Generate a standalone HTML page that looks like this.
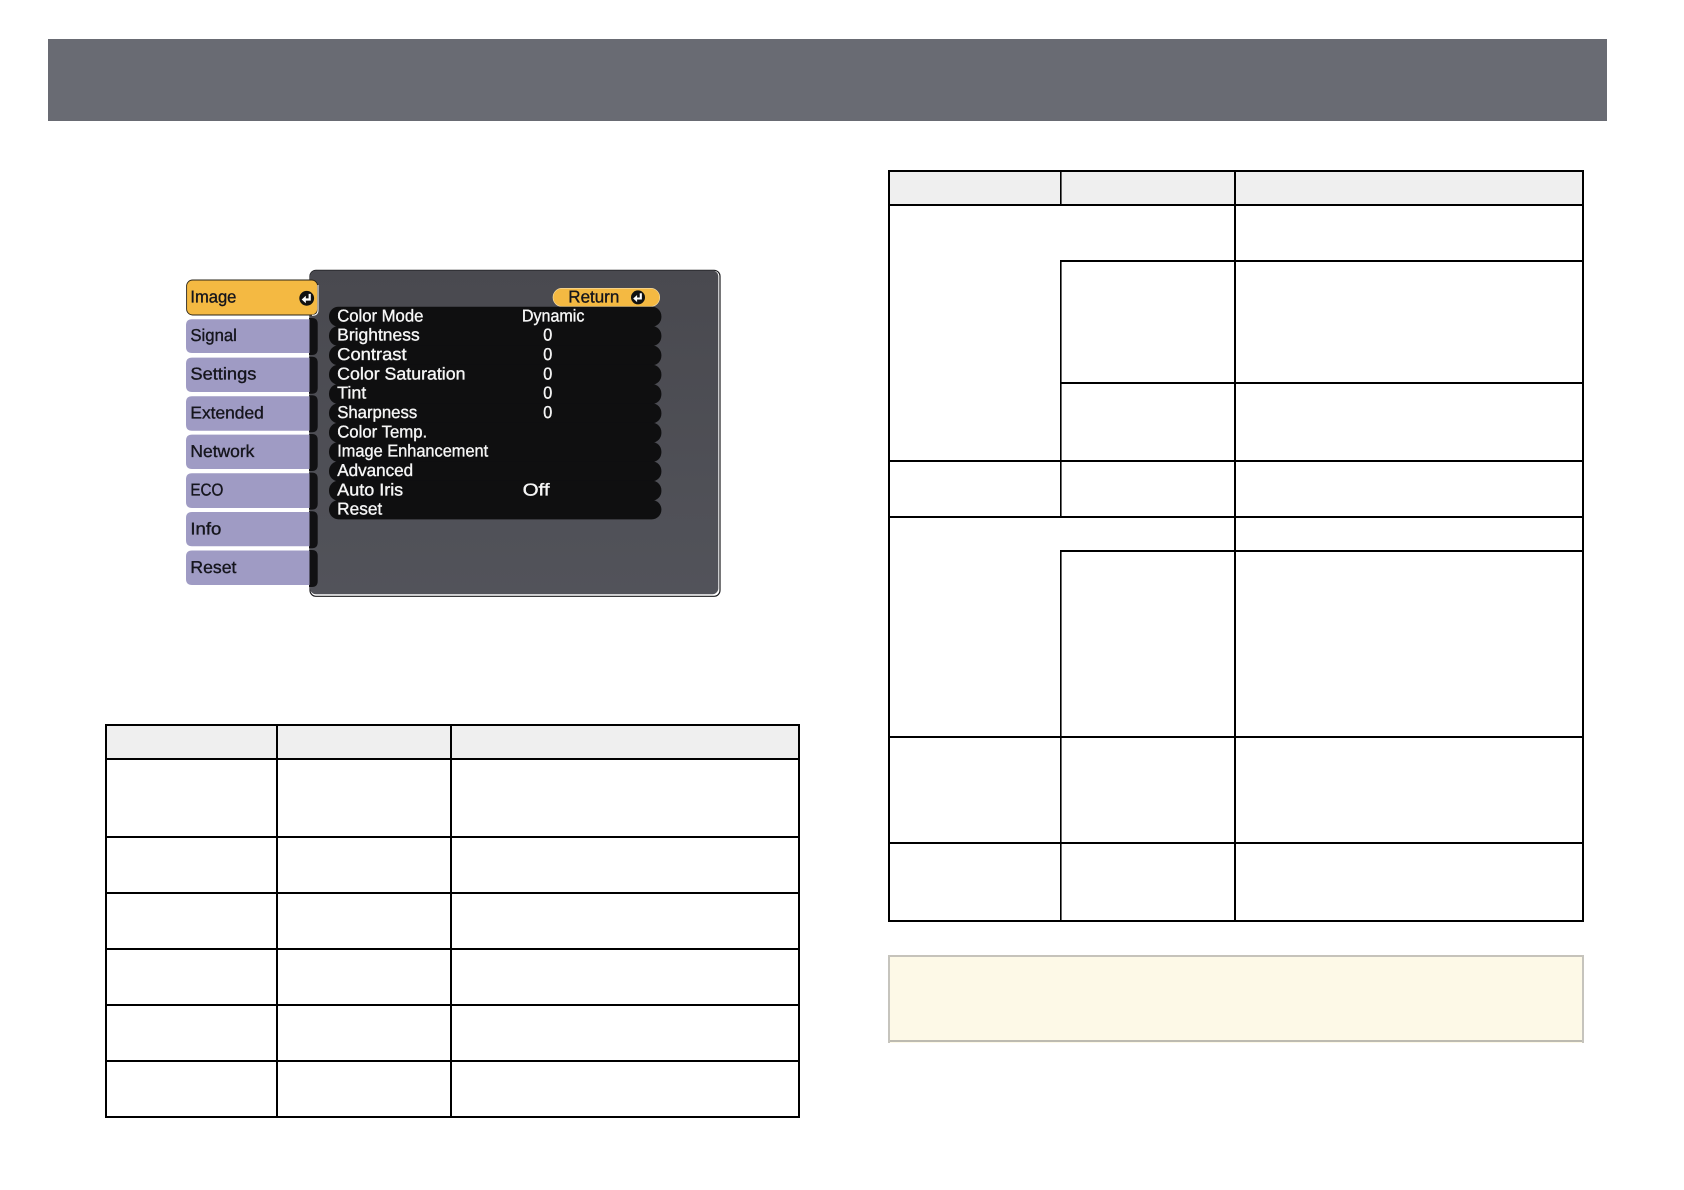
<!DOCTYPE html>
<html lang="en">
<head>
<meta charset="utf-8">
<title>Image menu</title>
<style>
html,body{margin:0;padding:0;background:#fff;width:1684px;height:1190px;overflow:hidden}
svg{position:absolute;left:0;top:0;display:block}
text{font-family:"Liberation Sans",Arial,sans-serif;font-size:17.2px;text-rendering:geometricPrecision}
.w{fill:#f6f6f6;stroke:#f6f6f6;stroke-width:.35}
.d{fill:#15151c;stroke:#15151c;stroke-width:.35}
</style>
</head>
<body>
<svg width="1684" height="1190" viewBox="0 0 1684 1190" xmlns="http://www.w3.org/2000/svg">
<defs>
<linearGradient id="pg" x1="0" y1="0" x2="0" y2="1">
<stop offset="0" stop-color="#49494f"/>
<stop offset="1" stop-color="#52535a"/>
</linearGradient>
</defs>

<!-- header band -->
<rect x="48" y="39" width="1559" height="82" fill="#696b73"/>

<!-- menu panel -->
<rect x="310" y="270.3" width="410" height="326" rx="6" fill="#fff" stroke="#1c1c1f" stroke-width="1.2"/>
<rect x="310" y="270.5" width="408.3" height="323.8" rx="6" fill="url(#pg)"/>

<!-- dark notches beside the tabs -->
<g fill="#111113">
<path d="M309 318H312Q317.7 318 317.7 324V349Q317.7 355 312 355H309Z"/>
<path d="M309 356.7H312Q317.7 356.7 317.7 362.7V387.7Q317.7 393.7 312 393.7H309Z"/>
<path d="M309 395.3H312Q317.7 395.3 317.7 401.3V426.3Q317.7 432.3 312 432.3H309Z"/>
<path d="M309 434H312Q317.7 434 317.7 440V465Q317.7 471 312 471H309Z"/>
<path d="M309 472.6H312Q317.7 472.6 317.7 478.6V503.6Q317.7 509.6 312 509.6H309Z"/>
<path d="M309 511.3H312Q317.7 511.3 317.7 517.3V542.3Q317.7 548.3 312 548.3H309Z"/>
<path d="M309 550H312Q317.7 550 317.7 556V581Q317.7 587 312 587H309Z"/>
</g>

<!-- purple tabs -->
<g fill="#9f9bc4">
<path d="M309.5 319.3V353H192Q186 353 186 347V325.3Q186 319.3 192 319.3Z"/>
<path d="M309.5 357.6V392H192Q186 392 186 386V363.6Q186 357.6 192 357.6Z"/>
<path d="M309.5 396.3V430.7H192Q186 430.7 186 424.7V402.3Q186 396.3 192 396.3Z"/>
<path d="M309.5 434.6V469H192Q186 469 186 463V440.6Q186 434.6 192 434.6Z"/>
<path d="M309.5 473.3V508H192Q186 508 186 502V479.3Q186 473.3 192 473.3Z"/>
<path d="M309.5 512V546.3H192Q186 546.3 186 540.3V518Q186 512 192 512Z"/>
<path d="M309.5 550.5V585H192Q186 585 186 579V556.5Q186 550.5 192 550.5Z"/>
</g>

<!-- selected tab -->
<rect x="186.6" y="280" width="131" height="35" rx="6" fill="#f4b942" stroke="#2a2418" stroke-width=".9"/>
<path d="M312 315.3H313Q318 315 318 310V285" fill="none" stroke="#fff" stroke-width="1"/>

<!-- tab labels -->
<text class="d" x="190.4" y="302.3" textLength="46" lengthAdjust="spacingAndGlyphs">Image</text>
<text class="d" x="190.4" y="341" textLength="46.5" lengthAdjust="spacingAndGlyphs">Signal</text>
<text class="d" x="190.4" y="379.6" textLength="66" lengthAdjust="spacingAndGlyphs">Settings</text>
<text class="d" x="190.4" y="418.3" textLength="73.4" lengthAdjust="spacingAndGlyphs">Extended</text>
<text class="d" x="190.4" y="457" textLength="64" lengthAdjust="spacingAndGlyphs">Network</text>
<text class="d" x="190.4" y="495.6" textLength="33" lengthAdjust="spacingAndGlyphs">ECO</text>
<text class="d" x="190.4" y="534.3" textLength="31" lengthAdjust="spacingAndGlyphs">Info</text>
<text class="d" x="190.4" y="573" textLength="46" lengthAdjust="spacingAndGlyphs">Reset</text>

<!-- enter icon on the selected tab -->
<g transform="translate(306.7 298.3)">
<circle r="7.4" fill="#111"/>
<path d="M3 -4.4V1.2H-1.5" fill="none" stroke="#fff" stroke-width="2.2"/>
<path d="M-5 1.2L-.9 -2.6V5Z" fill="#fff"/>
</g>

<!-- return pill -->
<rect x="553" y="288.3" width="106.7" height="18.2" rx="9" fill="#f4b942" stroke="#f8e2ae" stroke-width=".6"/>
<text class="d" x="568.3" y="302.3" textLength="51" lengthAdjust="spacingAndGlyphs">Return</text>
<g transform="translate(638 297.4)">
<circle r="7" fill="#111"/>
<path d="M2.8 -4.2V1.1H-1.4" fill="none" stroke="#fff" stroke-width="2.1"/>
<path d="M-4.8 1.1L-.9 -2.4V4.7Z" fill="#fff"/>
</g>

<!-- list rows -->
<g fill="#0f0f10">
<rect x="329" y="306.7" width="332.4" height="20" rx="9.6"/>
<rect x="329" y="326" width="332.4" height="20" rx="9.6"/>
<rect x="329" y="345.4" width="332.4" height="20" rx="9.6"/>
<rect x="329" y="364.7" width="332.4" height="20" rx="9.6"/>
<rect x="329" y="384" width="332.4" height="20" rx="9.6"/>
<rect x="329" y="403.3" width="332.4" height="20" rx="9.6"/>
<rect x="329" y="422.7" width="332.4" height="20" rx="9.6"/>
<rect x="329" y="442" width="332.4" height="20" rx="9.6"/>
<rect x="329" y="461.3" width="332.4" height="20" rx="9.6"/>
<rect x="329" y="480.7" width="332.4" height="20" rx="9.6"/>
<rect x="329" y="500" width="332.4" height="19.33" rx="9.6"/>
</g>

<text class="w" x="337.2" y="321.3" textLength="86.2" lengthAdjust="spacingAndGlyphs">Color Mode</text>
<text class="w" x="337.2" y="340.6" textLength="82.5" lengthAdjust="spacingAndGlyphs">Brightness</text>
<text class="w" x="337.2" y="360" textLength="69.4" lengthAdjust="spacingAndGlyphs">Contrast</text>
<text class="w" x="337.2" y="379.3" textLength="128.3" lengthAdjust="spacingAndGlyphs">Color Saturation</text>
<text class="w" x="337.2" y="398.6" textLength="29" lengthAdjust="spacingAndGlyphs">Tint</text>
<text class="w" x="337.2" y="418" textLength="80" lengthAdjust="spacingAndGlyphs">Sharpness</text>
<text class="w" x="337.2" y="437.3" textLength="90" lengthAdjust="spacingAndGlyphs">Color Temp.</text>
<text class="w" x="337.2" y="456.6" textLength="151" lengthAdjust="spacingAndGlyphs">Image Enhancement</text>
<text class="w" x="337.2" y="476" textLength="76" lengthAdjust="spacingAndGlyphs">Advanced</text>
<text class="w" x="337.2" y="495.3" textLength="66" lengthAdjust="spacingAndGlyphs">Auto Iris</text>
<text class="w" x="337.2" y="514.6" textLength="45" lengthAdjust="spacingAndGlyphs">Reset</text>

<text class="w" x="521.9" y="321.3" textLength="62.5" lengthAdjust="spacingAndGlyphs">Dynamic</text>
<text class="w" x="543.3" y="340.6" textLength="9" lengthAdjust="spacingAndGlyphs">0</text>
<text class="w" x="543.3" y="360" textLength="9" lengthAdjust="spacingAndGlyphs">0</text>
<text class="w" x="543.3" y="379.3" textLength="9" lengthAdjust="spacingAndGlyphs">0</text>
<text class="w" x="543.3" y="398.6" textLength="9" lengthAdjust="spacingAndGlyphs">0</text>
<text class="w" x="543.3" y="418" textLength="9" lengthAdjust="spacingAndGlyphs">0</text>
<text class="w" x="522.6" y="495.3" textLength="27" lengthAdjust="spacingAndGlyphs">Off</text>

<!-- left table -->
<rect x="106" y="725" width="693" height="34" fill="#efefef"/>
<g fill="#000">
<rect x="105" y="724" width="695" height="2"/>
<rect x="105" y="758" width="695" height="2"/>
<rect x="105" y="836" width="695" height="2"/>
<rect x="105" y="892" width="695" height="2"/>
<rect x="105" y="948" width="695" height="2"/>
<rect x="105" y="1004" width="695" height="2"/>
<rect x="105" y="1060" width="695" height="2"/>
<rect x="105" y="1116" width="695" height="2"/>
<rect x="105" y="724" width="2" height="394"/>
<rect x="276" y="724" width="2" height="394"/>
<rect x="450" y="724" width="2" height="394"/>
<rect x="798" y="724" width="2" height="394"/>
</g>

<!-- right table -->
<rect x="889" y="171" width="694" height="34" fill="#efefef"/>
<g fill="#000">
<rect x="888" y="170" width="696" height="2"/>
<rect x="888" y="204" width="696" height="2"/>
<rect x="1060" y="260" width="524" height="2"/>
<rect x="1060" y="382" width="524" height="2"/>
<rect x="888" y="460" width="696" height="2"/>
<rect x="888" y="516" width="696" height="2"/>
<rect x="1060" y="550" width="524" height="2"/>
<rect x="888" y="736" width="696" height="2"/>
<rect x="888" y="842" width="696" height="2"/>
<rect x="888" y="920" width="696" height="2"/>
<rect x="888" y="170" width="2" height="752"/>
<rect x="1234" y="170" width="2" height="752"/>
<rect x="1582" y="170" width="2" height="752"/>
<rect x="1060" y="170" width="1.6" height="35"/>
<rect x="1060" y="261" width="1.6" height="256"/>
<rect x="1060" y="551" width="1.6" height="370"/>
</g>

<!-- note box -->
<rect x="888" y="955" width="696" height="88" fill="#fdf9e7"/>
<rect x="888" y="955" width="696" height="2" fill="#c6c3bb"/>
<rect x="888" y="1040" width="696" height="2" fill="#bdbbb1"/>
<rect x="888" y="955" width="2" height="88" fill="#c6c4bd"/>
<rect x="1582" y="955" width="2" height="88" fill="#c6c4bd"/>
</svg>
</body>
</html>
